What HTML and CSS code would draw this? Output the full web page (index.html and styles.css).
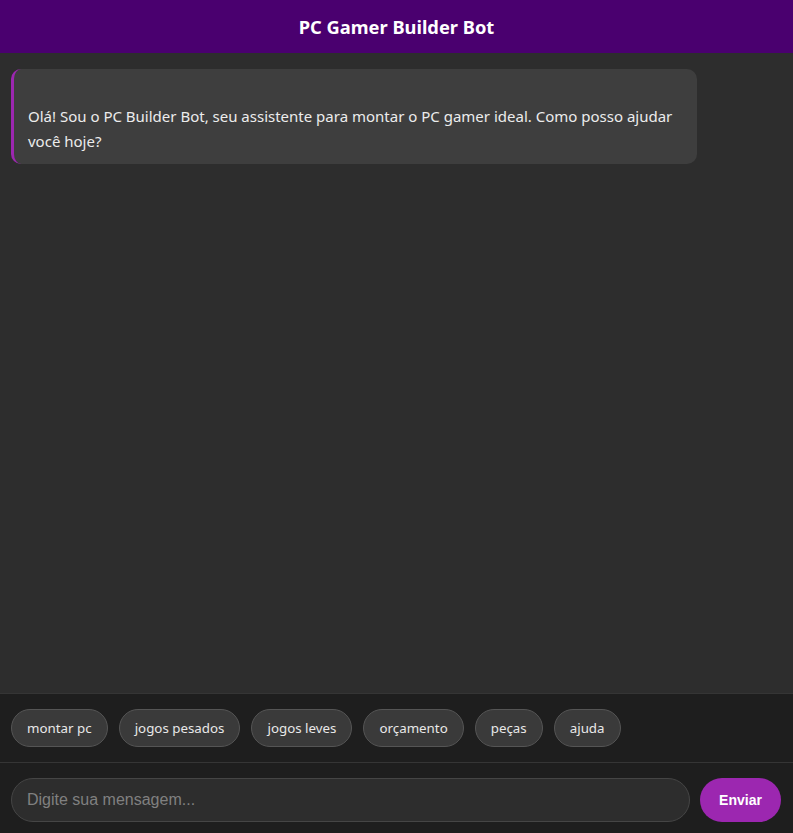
FILE: index.html
```html
<!DOCTYPE html>
<html lang="pt-BR">
<head>
<meta charset="utf-8">
<title>PC Gamer Builder Bot</title>
<link rel="stylesheet" href="styles.css">
</head>
<body>
<div class="app">
  <header class="header">PC Gamer Builder Bot</header>
  <main class="chat">
    <div class="msg bot"><span class="blank"></span>Olá! Sou o PC Builder Bot, seu assistente para montar o PC gamer ideal. Como posso ajudar você hoje?</div>
  </main>
  <div class="quick">
    <button class="chip">montar pc</button>
    <button class="chip">jogos pesados</button>
    <button class="chip">jogos leves</button>
    <button class="chip">orçamento</button>
    <button class="chip">peças</button>
    <button class="chip">ajuda</button>
  </div>
  <form class="composer">
    <input class="field" type="text" placeholder="Digite sua mensagem...">
    <button class="send" type="button">Enviar</button>
  </form>
</div>
</body>
</html>
```
FILE: styles.css
```css
* { box-sizing: border-box; }
html, body { margin: 0; padding: 0; height: 100%; }
body {
  background: #2d2d2d;
  font-family: "Noto Sans", "Open Sans", sans-serif;
  color: #e6e6e6;
}
.app {
  display: flex;
  flex-direction: column;
  height: 833px;
}
.header {
  height: 53px;
  background: #4a006f;
  color: #fff;
  font-weight: 700;
  font-size: 18.3px;
  display: flex;
  align-items: center;
  justify-content: center;
}
.chat {
  flex: 1;
  padding: 16px 11px;
}
.msg {
  width: 686px;
  background: #3e3e3e;
  border-left: 3px solid #9c27b0;
  border-radius: 10px;
  padding: 10px 15px 10px 14px;
  font-size: 15px;
  line-height: 25px;
  color: #ececec;
}
.blank { display: block; height: 25px; }
.quick {
  display: flex;
  gap: 11px;
  padding: 15px 11px 15px;
  background: #1e1e1e;
  border-top: 1px solid #353535;
  height: 69px;
}
.chip {
  height: 38px;
  padding: 0 15px;
  border-radius: 19px;
  background: #3a3a3a;
  border: 1px solid #555;
  color: #e8e8e8;
  font-family: "Noto Sans", sans-serif;
  font-size: 13.33px;
}
.composer {
  display: flex;
  gap: 10px;
  align-items: center;
  padding: 15px 12px 11px 11px;
  background: #1e1e1e;
  border-top: 1px solid #353535;
  height: 71px;
  margin: 0;
}
.field {
  flex: 1;
  height: 44px;
  border-radius: 22px;
  background: #2d2d2d;
  border: 1px solid #454545;
  padding: 0 15px;
  font-family: "Liberation Sans", Arial, sans-serif;
  font-size: 16px;
  color: #eee;
  outline: none;
}
.field::placeholder { color: #808080; }
.send {
  width: 81px;
  height: 44px;
  border: none;
  border-radius: 22px;
  background: #9c27b0;
  color: #fff;
  font-family: "Liberation Sans", Arial, sans-serif;
  font-weight: 700;
  font-size: 14px;
}
```
